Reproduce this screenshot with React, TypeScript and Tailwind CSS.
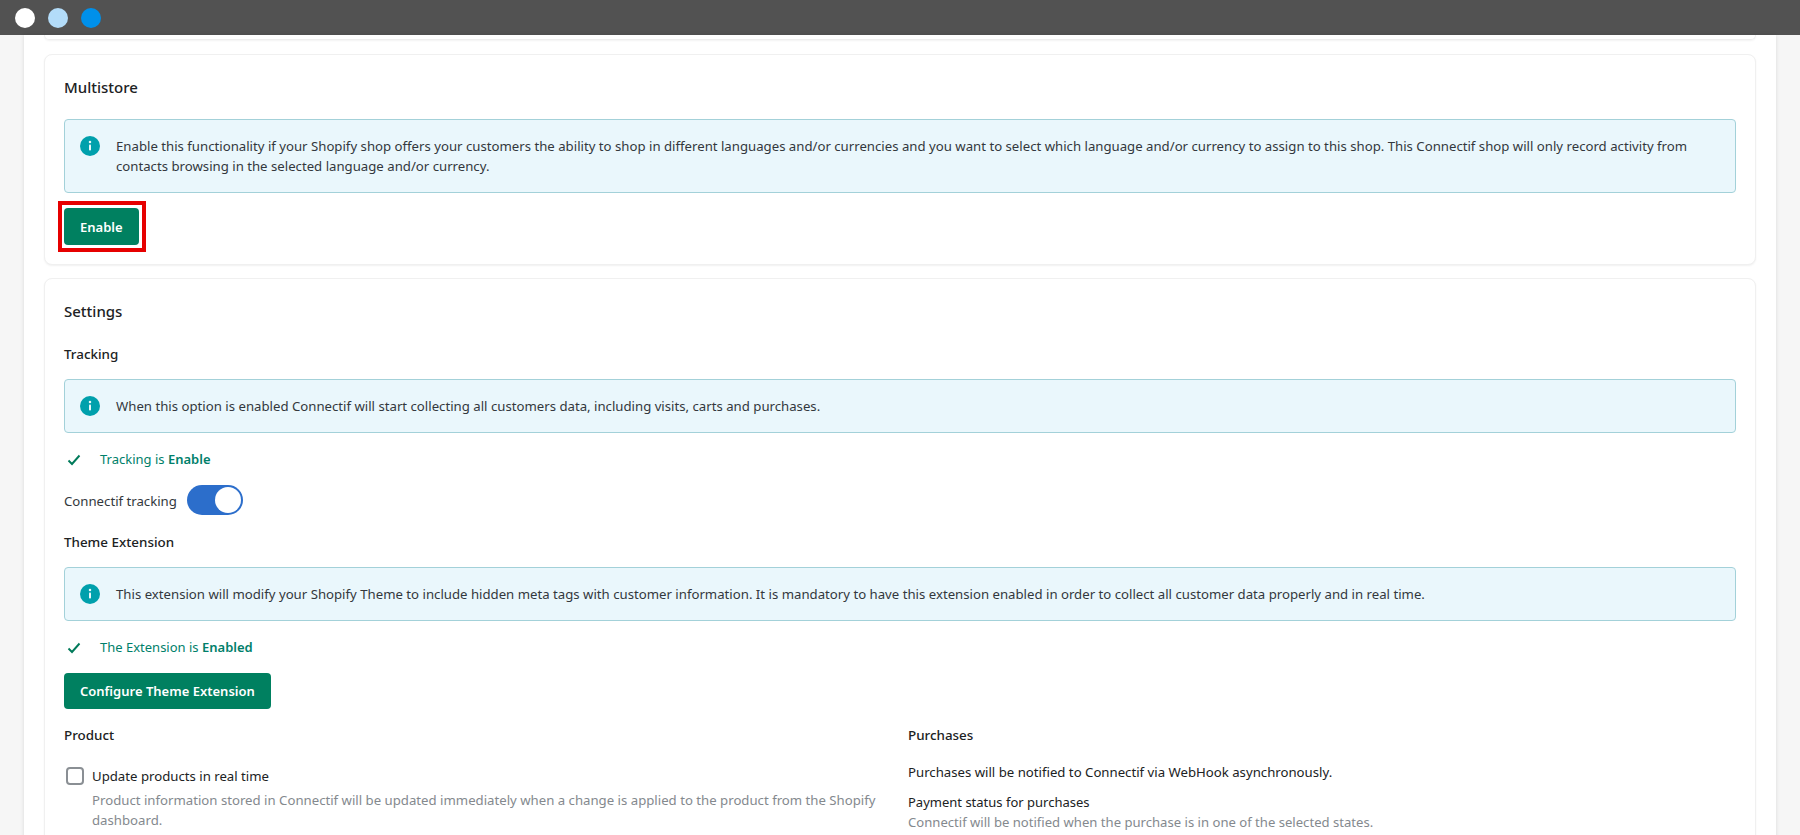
const font = "font-['Noto_Sans',sans-serif]";

function InfoIcon() {
  return (
    <svg viewBox="0 0 20 20" className="h-5 w-5 shrink-0">
      <circle cx="10" cy="10" r="10" fill="#00a0ac" />
      <circle cx="10" cy="6" r="1.25" fill="#e8f7fa" />
      <rect x="9" y="8.6" width="2" height="6" rx="0.8" fill="#e8f7fa" />
    </svg>
  );
}

function Notice({ children }: { children: React.ReactNode }) {
  return (
    <div className="flex gap-[16px] rounded-[4px] border border-[#a3d1d9] bg-[#eaf7fc] py-[16px] pl-[15px] pr-[20px]">
      <InfoIcon />
      <p className="text-[13.2px] leading-[20px] text-[#33383d]">{children}</p>
    </div>
  );
}

function Status({ label, value }: { label: string; value: string }) {
  return (
    <div className="flex h-[20px] items-center text-[13px] text-[#00806a]">
      <svg viewBox="0 0 14 12" className="ml-[3px] h-[12px] w-[14px]" fill="none">
        <path d="M1.5 6.5 5 10l7.5-8.5" stroke="#007a5a" strokeWidth="1.9" />
      </svg>
      <span className="ml-[19px]">
        {label} <span className="font-semibold">{value}</span>
      </span>
    </div>
  );
}

export default function App() {
  return (
    <div className={`flex h-[835px] flex-col overflow-hidden bg-[#f6f6f6] ${font}`}>
      {/* Browser bar */}
      <div className="flex h-[35px] shrink-0 items-center gap-[13px] bg-[#525252] pl-[15px]">
        <span className="h-5 w-5 rounded-full bg-white" />
        <span className="h-5 w-5 rounded-full bg-[#b3dcf9]" />
        <span className="h-5 w-5 rounded-full bg-[#0090ea]" />
      </div>

      <div className="mx-[24px] flex flex-1 flex-col bg-white px-[20px] shadow-[0_0_4px_rgba(0,0,0,0.12)]">
        {/* Card cut off by the bar */}
        <div className="h-[5px] shrink-0 rounded-b-lg border-b border-x border-[#efefef] shadow-[0_1px_2px_rgba(0,0,0,0.05)]" />

        {/* Multistore */}
        <section className="mt-[14px] shrink-0 rounded-lg border border-[#f0f0f0] bg-white px-[19px] pb-[19px] pt-[22px] shadow-[0_1px_2px_rgba(0,0,0,0.06)]">
          <h2 className="text-[15px] font-medium leading-[20px] text-[#202223]">Multistore</h2>
          <div className="mt-[22px]">
            <Notice>
              Enable this functionality if your Shopify shop offers your customers the ability to shop in different
              languages and/or currencies and you want to select which language and/or currency to assign to this shop.
              This Connectif shop will only record activity from contacts browsing in the selected language and/or
              currency.
            </Notice>
          </div>
          <div className="mt-[15px] flex">
            <div className="relative">
              <button className="h-[37px] rounded-[4px] bg-[#008060] px-[16px] pt-[2px] text-[13px] font-semibold text-white">
                Enable
              </button>
              <span className="absolute -bottom-[7px] -left-[6px] -right-[7px] -top-[7px] border-4 border-[#e60000]" />
            </div>
          </div>
        </section>

        {/* Settings */}
        <section className="mt-[13px] shrink-0 rounded-lg border border-[#f0f0f0] bg-white px-[19px] pb-[40px] pt-[22px] shadow-[0_1px_2px_rgba(0,0,0,0.06)]">
          <h2 className="text-[15px] font-medium leading-[20px] text-[#202223]">Settings</h2>
          <h3 className="mt-[23px] text-[13.4px] font-medium leading-[20px] text-[#202223]">Tracking</h3>
          <div className="mt-[15px]">
            <Notice>
              When this option is enabled Connectif will start collecting all customers data, including visits, carts
              and purchases.
            </Notice>
          </div>
          <div className="mt-[17px]">
            <Status label="Tracking is" value="Enable" />
          </div>
          <div className="mt-[15px] flex items-center gap-[10px]">
            <span className="mt-[4px] text-[13.2px] text-[#33383d]">Connectif tracking</span>
            <span className="flex h-[30px] w-[56px] items-center justify-end rounded-full bg-[#2c6ecb] pr-[2px]">
              <span className="h-[26px] w-[26px] rounded-full bg-white" />
            </span>
          </div>
          <h3 className="mt-[17px] text-[13.4px] font-medium leading-[20px] text-[#202223]">Theme Extension</h3>
          <div className="mt-[15px]">
            <Notice>
              This extension will modify your Shopify Theme to include hidden meta tags with customer information. It is
              mandatory to have this extension enabled in order to collect all customer data properly and in real time.
            </Notice>
          </div>
          <div className="mt-[17px]">
            <Status label="The Extension is" value="Enabled" />
          </div>
          <div className="mt-[15px] flex">
            <button className="h-[36px] rounded-[4px] bg-[#008060] px-[16px] pt-[1px] text-[13px] font-semibold text-white">
              Configure Theme Extension
            </button>
          </div>

          <div className="mt-[16px] grid grid-cols-2 gap-[16px]">
            <div>
              <h3 className="text-[13.4px] font-medium leading-[20px] text-[#202223]">Product</h3>
              <div className="mt-[21px] flex gap-[8px] pl-[2px]">
                <span className="mt-[1px] h-[18px] w-[18px] shrink-0 rounded-[4px] border-2 border-[#8a8f94] bg-white" />
                <div>
                  <p className="text-[13.2px] leading-[20px] text-[#202223]">Update products in real time</p>
                  <p className="mt-[4px] text-[13.2px] leading-[20px] text-[#84898e]">
                    Product information stored in Connectif will be updated immediately when a change is applied to the
                    product from the Shopify dashboard.
                  </p>
                </div>
              </div>
            </div>
            <div>
              <h3 className="text-[13.4px] font-medium leading-[20px] text-[#202223]">Purchases</h3>
              <p className="mt-[17px] text-[13.2px] leading-[20px] text-[#202223]">
                Purchases will be notified to Connectif via WebHook asynchronously.
              </p>
              <p className="mt-[10px] text-[13px] leading-[20px] text-[#202223]">Payment status for purchases</p>
              <p className="text-[13.1px] leading-[20px] text-[#84898e]">
                Connectif will be notified when the purchase is in one of the selected states.
              </p>
            </div>
          </div>
        </section>
      </div>
    </div>
  );
}
